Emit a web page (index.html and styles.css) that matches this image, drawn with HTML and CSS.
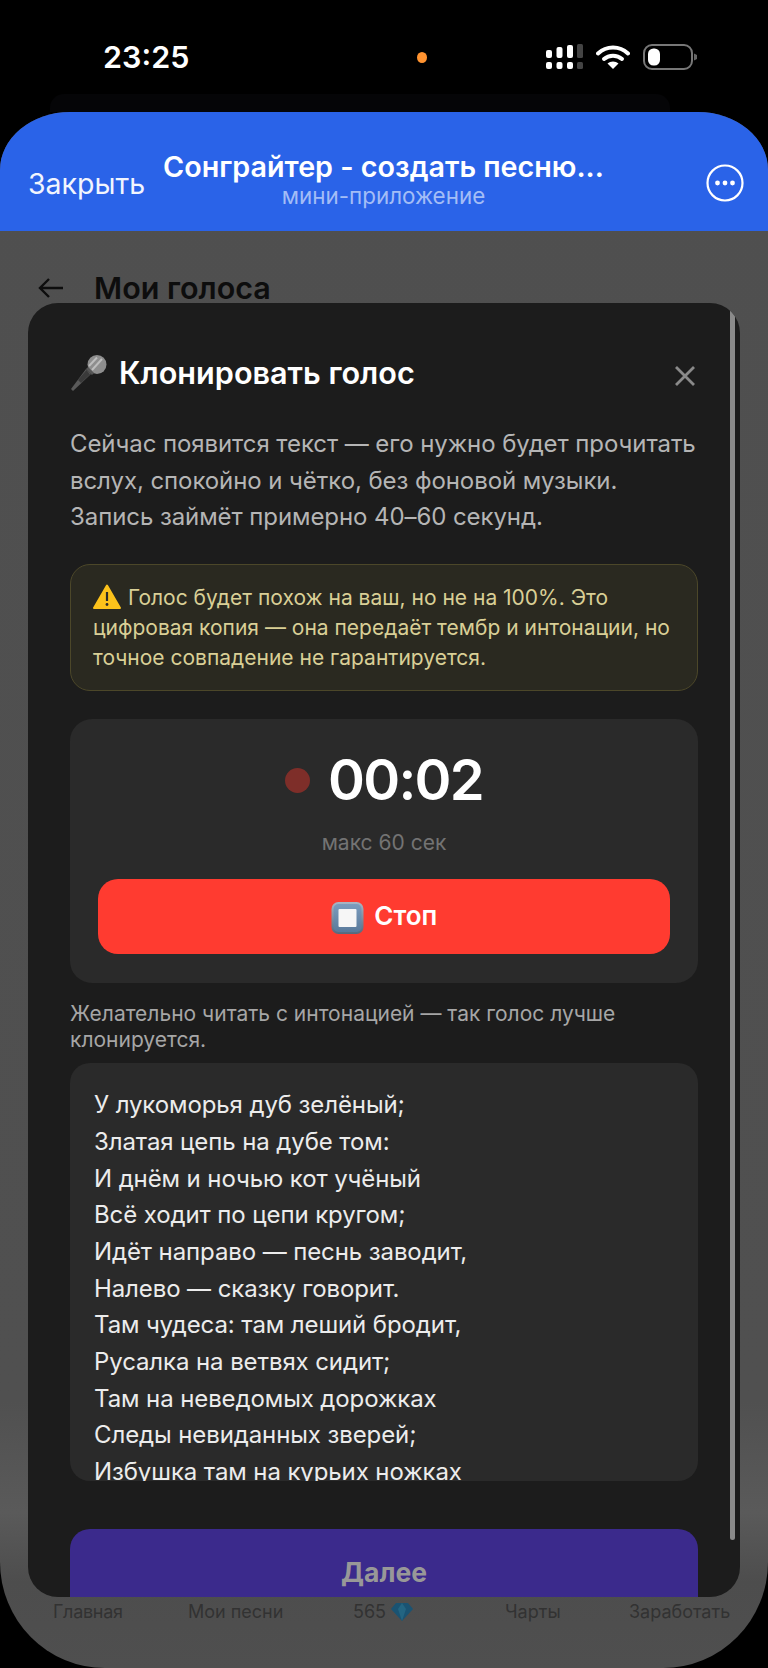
FILE: index.html
```html
<!DOCTYPE html>
<html lang="ru">
<head>
    <meta charset="UTF-8">
    <meta name="viewport" content="width=device-width, initial-scale=1.0">
    <title>Клонировать голос</title>
    <link rel="stylesheet" href="styles.css">
</head>
<body>
    <div class="status-bar">
        <span class="clock">23:25</span>
        <span class="orange-dot"></span>
        <div class="status-icons">
            <svg class="signal" width="37" height="26" viewBox="0 0 37 26">
                <rect x="0" y="6" width="6" height="8" rx="2" fill="#fff"/>
                <rect x="10.500" y="3" width="6" height="11" rx="2" fill="#fff"/>
                <rect x="21" y="1" width="6" height="13" rx="2" fill="#fff"/>
                <rect x="31" y="0" width="6" height="14" rx="1.500" fill="#444"/>
                <rect x="0" y="18" width="6" height="7" rx="2" fill="#fff"/>
                <rect x="10.500" y="18" width="6" height="7" rx="2" fill="#fff"/>
                <rect x="21" y="18" width="6" height="7" rx="2" fill="#fff"/>
                <rect x="31" y="18" width="6" height="7" rx="1.500" fill="#444"/>
            </svg>
            <svg class="wifi" width="34" height="25" viewBox="0 0 34 25">
                <path d="M2 9.500C10.500 1.500 23.500 1.500 32 9.500" fill="none" stroke="#fff" stroke-width="4" stroke-linecap="round"/>
                <path d="M8 15C13 10.500 21 10.500 26 15" fill="none" stroke="#fff" stroke-width="4" stroke-linecap="round"/>
                <path d="M11.500 19.500C14.500 16.800 19.500 16.800 22.500 19.500L17 25Z" fill="#fff"/>
            </svg>
            <svg class="battery" width="55" height="26" viewBox="0 0 55 26">
                <rect x="1" y="1" width="48" height="24" rx="8" fill="none" stroke="#777" stroke-width="2"/>
                <rect x="5" y="4.500" width="12" height="17" rx="5.500" fill="#fff"/>
                <path d="M51 9.500L54 11V15L51 16.500Z" fill="#666"/>
            </svg>
        </div>
    </div>

    <div class="app">
        <header class="tg-header">
            <span class="tg-close">Закрыть</span>
            <div class="tg-title">
                <div class="tg-name">Сонграйтер - создать песню...</div>
                <div class="tg-sub">мини-приложение</div>
            </div>
            <svg class="tg-more" width="38" height="38" viewBox="0 0 38 38">
                <circle cx="19" cy="19" r="17.500" fill="none" stroke="#fff" stroke-width="2.200"/>
                <circle cx="11.500" cy="19" r="2.400" fill="#fff"/>
                <circle cx="19" cy="19" r="2.400" fill="#fff"/>
                <circle cx="26.500" cy="19" r="2.400" fill="#fff"/>
            </svg>
        </header>

        <div class="page-head">
            <svg width="28" height="24" viewBox="0 0 28 24">
                <path d="M26 12H3M12 3L3 12L12 21" fill="none" stroke="#0d0d0d" stroke-width="2.400"/>
            </svg>
            <h2>Мои голоса</h2>
        </div>

        <nav class="tabs">
            <span class="tab tab-home">Главная</span>
            <span class="tab tab-songs">Мои песни</span>
            <span class="tab tab-balance">565
                <svg width="22" height="18" viewBox="0 0 22 18">
                    <path d="M5 0H17L22 6L11 18L0 6Z" fill="#1a5372"/>
                    <path d="M7 6L11 18L15 6L11 0Z" fill="#236582"/>
                </svg>
            </span>
            <span class="tab tab-charts">Чарты</span>
            <span class="tab tab-earn">Заработать</span>
        </nav>

        <section class="modal">
            <div class="modal-head">
                <svg class="mic" width="38" height="36" viewBox="0 0 38 36">
                    <path d="M1 34L3 36L21 19L16 14Z" fill="#5a5a5a"/>
                    <path d="M8 25L11 28L20 19.500L16.500 15Z" fill="#3a3a3a"/>
                    <circle cx="27" cy="9.500" r="9.500" fill="#8e8e8e"/>
                    <path d="M19 11L27 2.500M22 15L32 4" stroke="#bdbdbd" stroke-width="2"/>
                    <path d="M17 13L23 19" stroke="#555" stroke-width="3"/>
                </svg>
                <h3>Клонировать голос</h3>
                <svg class="close" width="22" height="22" viewBox="0 0 22 22">
                    <path d="M2 2L20 20M20 2L2 20" stroke="#8a8a8a" stroke-width="2.800"/>
                </svg>
            </div>

            <p class="intro">Сейчас появится текст — его нужно будет прочитать вслух, спокойно и чётко, без фоновой музыки. Запись займёт примерно 40–60 секунд.</p>

            <div class="warn">
                <svg width="28" height="25" viewBox="0 0 28 25">
                    <path d="M14 1.500L27 24H1Z" fill="#fcc21b" stroke="#fcc21b" stroke-width="2" stroke-linejoin="round"/>
                    <path d="M14 8V17" stroke="#2b2b2b" stroke-width="2.200"/>
                    <circle cx="14" cy="20.500" r="1.400" fill="#2b2b2b"/>
                </svg>
                Голос будет похож на ваш, но не на 100%. Это цифровая копия — она передаёт тембр и интонации, но точное совпадение не гарантируется.
            </div>

            <div class="rec-card">
                <div class="timer"><span class="rec-dot"></span>00:02</div>
                <div class="rec-max">макс 60 сек</div>
                <button class="stop-btn">
                    <svg width="33" height="32" viewBox="0 0 33 32">
                        <defs>
                            <linearGradient id="stopEdge" x1="0" y1="0" x2="0" y2="1">
                                <stop offset="0" stop-color="#a9b6c4"/>
                                <stop offset="1" stop-color="#56697d"/>
                            </linearGradient>
                            <linearGradient id="stopFill" x1="0" y1="0" x2="0" y2="1">
                                <stop offset="0" stop-color="#7c9cbd"/>
                                <stop offset="1" stop-color="#5a7a9b"/>
                            </linearGradient>
                        </defs>
                        <rect x="0.500" y="0" width="32" height="32" rx="7" fill="url(#stopEdge)"/>
                        <rect x="2.500" y="2" width="28" height="28" rx="5" fill="url(#stopFill)"/>
                        <rect x="7.500" y="7" width="18" height="18" rx="1" fill="#f6f6f6"/>
                    </svg>
                    Стоп
                </button>
            </div>

            <p class="hint">Желательно читать с интонацией — так голос лучше клонируется.</p>

            <div class="poem">
                У лукоморья дуб зелёный;<br>
                Златая цепь на дубе том:<br>
                И днём и ночью кот учёный<br>
                Всё ходит по цепи кругом;<br>
                Идёт направо — песнь заводит,<br>
                Налево — сказку говорит.<br>
                Там чудеса: там леший бродит,<br>
                Русалка на ветвях сидит;<br>
                Там на неведомых дорожках<br>
                Следы невиданных зверей;<br>
                Избушка там на курьих ножках<br>
                Стоит без окон, без дверей;
            </div>

            <button class="next-btn">Далее</button>
            <div class="scroll-thumb"></div>
        </section>
    </div>
</body>
</html>
```

FILE: styles.css
```css
* {
    box-sizing: border-box;
}
html, body {
    margin: 0;
    padding: 0;
}
body {
    width: 768px;
    height: 1668px;
    overflow: hidden;
    background-color: #000;
    font-family: Inter, "Liberation Sans", sans-serif;
}
h2, h3, p {
    margin: 0;
}
button {
    border: none;
    font-family: inherit;
    display: block;
    width: 100%;
}

/* status bar */
.status-bar {
    height: 112px;
    padding: 38px 70px 0 103px;
    display: flex;
    align-items: flex-start;
    position: relative;
}
.status-bar::after {
    content: "";
    position: absolute;
    left: 50px;
    right: 98px;
    bottom: 0;
    height: 18px;
    background-color: #050507;
    border-radius: 14px 14px 0 0;
}
.clock {
    color: #fff;
    font-size: 30.500px;
    font-weight: 600;
    line-height: 38px;
    width: 314px;
}
.orange-dot {
    width: 10px;
    height: 11px;
    margin-top: 14px;
    border-radius: 50%;
    background-color: #ff9330;
}
.status-icons {
    margin-left: auto;
    display: flex;
    align-items: flex-start;
    gap: 13px;
    margin-top: 6px;
}

/* app frame */
.app {
    position: relative;
    z-index: 1;
    height: 1556px;
    display: flex;
    flex-direction: column;
    overflow: hidden;
    border-radius: 70px 70px 105px 105px / 58px 58px 106px 106px;
    background: linear-gradient(#4f4f4f 0, #505050 1290px, #5a5a5a 1400px, #4d4d4d 1470px, #4f4f4f 100%);
}
.tg-header {
    height: 119px;
    flex-shrink: 0;
    background-color: #2a63e8;
    display: flex;
    align-items: center;
    padding: 18px 24px 0 28px;
    color: #fff;
}
.tg-close {
    font-size: 28.500px;
    width: 135px;
    margin-top: 6px;
    color: #f2f5fe;
}
.tg-title {
    flex: 1;
    text-align: center;
    padding-right: 102px;
    margin-top: -3px;
    white-space: nowrap;
}
.tg-name {
    font-size: 28.700px;
    font-weight: 600;
    line-height: 34px;
}
.tg-sub {
    font-size: 22.400px;
    line-height: 26px;
    color: #a3bdf6;
    margin-top: -1px;
}
.tg-more {
    margin-top: 4px;
}
.page-head {
    display: flex;
    align-items: center;
    padding: 39px 0 0 37px;
    gap: 29px;
    color: #0d0d0d;
}
.page-head h2 {
    font-size: 30.500px;
    font-weight: 600;
    line-height: 36px;
}

/* bottom tabs */
.tabs {
    margin-top: auto;
    height: 70px;
    display: flex;
    align-items: flex-start;
    font-size: 18px;
    line-height: 24px;
    color: #323232;
    padding: 2px 0 0 53px;
}
.tab {
    display: flex;
    align-items: center;
    gap: 5px;
}
.tab-home {
    width: 135px;
    letter-spacing: -0.300px;
}
.tab-songs { width: 165px; }
.tab-balance { width: 152px; }
.tab-charts { width: 124px; }

/* modal */
.modal {
    position: absolute;
    top: 191px;
    left: 28px;
    width: 712px;
    height: 1294px;
    overflow: hidden;
    border-radius: 30px;
    background-color: #1c1c1c;
    padding: 51px 42px 0;
}
.modal-head {
    display: flex;
    align-items: center;
    height: 38px;
}
.mic {
    margin-right: 11px;
}
.modal-head h3 {
    color: #fff;
    font-size: 30.600px;
    font-weight: 600;
    line-height: 38px;
}
.close {
    margin-left: auto;
    margin-right: 2px;
    margin-top: 6px;
}
.intro {
    margin-top: 34px;
    font-size: 24px;
    line-height: 36.7px;
    letter-spacing: -0.080px;
    color: #b5b5b5;
}
.warn {
    margin-top: 28px;
    height: 127px;
    padding: 18px 22px;
    border: 1px solid #4c4729;
    border-radius: 20px;
    background-color: #2a2920;
    color: #d9cf96;
    font-size: 21px;
    line-height: 30px;
}
.warn svg {
    vertical-align: -4px;
    margin-right: 1px;
}
.rec-card {
    margin-top: 28px;
    height: 264px;
    padding: 27px 28px 0;
    border-radius: 22px;
    background-color: #2a2a2a;
    text-align: center;
}
.timer {
    display: flex;
    justify-content: center;
    align-items: center;
    gap: 18px;
    color: #fff;
    font-size: 56px;
    font-weight: 600;
    line-height: 68px;
    letter-spacing: -1.700px;
}
.rec-dot {
    width: 25px;
    height: 25px;
    border-radius: 50%;
    background-color: #7e2e29;
}
.rec-max {
    margin-top: 15px;
    font-size: 21px;
    line-height: 28px;
    color: #737373;
}
.stop-btn {
    margin-top: 22px;
    height: 75px;
    border-radius: 20px;
    background-color: #ff3b30;
    color: #fff;
    font-size: 26px;
    font-weight: 600;
}
.stop-btn svg {
    vertical-align: middle;
    margin-right: 4px;
}
.hint {
    margin-top: 18px;
    font-size: 21px;
    line-height: 26px;
    color: #a6a6a6;
}
.poem {
    margin-top: 10px;
    height: 418px;
    overflow: hidden;
    padding: 24px 24px 0;
    border-radius: 20px;
    background-color: #2a2a2a;
    color: #ececec;
    font-size: 24px;
    line-height: 36.7px;
    letter-spacing: -0.100px;
}
.next-btn {
    margin-top: 48px;
    height: 90px;
    border-radius: 20px;
    background-color: #3b2a8c;
    color: #989898;
    font-size: 26.500px;
    font-weight: 700;
    padding-bottom: 6px;
}
.scroll-thumb {
    position: absolute;
    top: 3px;
    left: 702px;
    width: 5px;
    height: 1234px;
    border-radius: 3px;
    background-color: #8a8a8a;
}
```
